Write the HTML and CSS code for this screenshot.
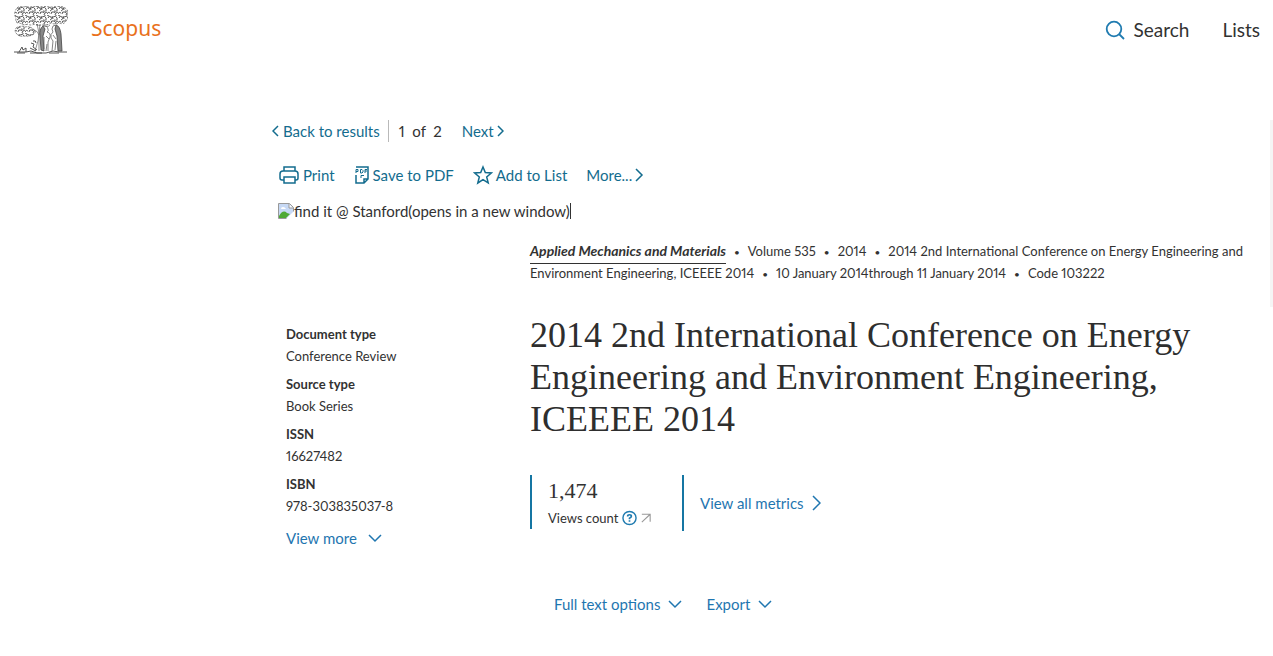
FILE: index.html
```html
<!DOCTYPE html>
<html lang="en">
<head>
<meta charset="utf-8">
<title>Scopus - Document details</title>
<link rel="stylesheet" href="styles.css">
</head>
<body>
<header class="header">
  <a class="brand" href="#">
    <svg class="tree" viewBox="0 0 54 48" width="54" height="48" fill="none" stroke="#666" aria-hidden="true">
      <defs>
        <pattern id="leaves" width="11" height="9" patternUnits="userSpaceOnUse">
          <path d="M1 3q1-3 3-1t-1 3M6 2q3-2 4 1t-3 2M0 8q1-3 3-1M4 8q0-3 3-2t1 3M9 7l2-1M5 1l1 3M0 0l2 1M8 0h2" stroke="#444" stroke-width=".9"/>
        </pattern>
      </defs>
      <path fill="url(#leaves)" stroke-dasharray="2 1.500" stroke-width=".8" d="M3 2q3-3 7-1 5-2 8 0 4-2 8 0 5-2 8 0 4-2 8 0 5-2 9 1 4 2 2 6 2 4-1 7-2 4-7 2-4 2-8 0-4 3-8 1-5 3-8 0-5 2-7 0-5 2-8-1-5 1-4-5-3-5 1-10z"/>
      <path fill="url(#leaves)" stroke-dasharray="2 1" stroke-width=".8" d="M2 22q5-3 9-1 5-1 8 2 4 2 1 5-5 3-10 2-5 1-7-2-3-2-1-6z"/>
      <path stroke-width=".7" d="M23 18l2 9-1 8-3 10M26 18l-1 10v17M20 24q4 1 5 5M28 19q6 3 8 0"/>
      <path fill="#888" stroke="#444" stroke-width=".8" d="M29 20q-4 3-3 10l1 14 3 1-1-15 2-7zM42 19q4 1 5 9l1 17h-4l-1-15-2-7z"/>
      <path stroke-width=".8" d="M29 20q4-1 5 3 1 2-1 3 4 1 3 5l-2 5v9M42 19q-4 0-4 4l1 3q-3 2-2 6l2 3-1 10M32 30l3 3M33 38l-1 7M39 29l3 4M42 35l-1 9M30 31v12"/>
      <path stroke="#444" stroke-width=".9" d="M17 37l3 1-1 3 4 3M19 35q3-1 3 2M16 42l6 3M5 46l3-5 1 3 3-2v4M0 46h12l5-1 6 2h9l7-2 6 1h8M3 47h8M16 47h12M35 47h10"/>
    </svg>
    <span>Scopus</span>
  </a>
  <nav class="header-nav" aria-label="Main">
    <a href="#"><svg width="20" height="20" viewBox="0 0 20 20" fill="none" stroke="#1f7bb0" stroke-width="1.800" aria-hidden="true"><circle cx="9" cy="9" r="7.300"/><path d="M14 14l5 5"/></svg>Search</a>
    <a href="#">Lists</a>
  </nav>
</header>
<div class="page">
  <main class="main">
    <nav class="results-nav" aria-label="Results">
      <a class="back" href="#"><svg width="7" height="12" viewBox="0 0 7 12" class="line"><path d="M6 1L1 6l5 5"/></svg>Back to results</a>
      <span class="count">1&nbsp; of&nbsp; 2</span>
      <a class="next" href="#">Next<svg width="7" height="12" viewBox="0 0 7 12" class="line"><path d="M1 1l5 5-5 5"/></svg></a>
    </nav>
    <div class="toolbar">
      <button type="button"><svg width="22" height="20" viewBox="0 0 22 20" class="line icon"><path d="M6 6V2h11v4M6 15H4q-2 0-2-2V9q0-3 3-3h12q3 0 3 3v4q0 2-2 2h-1M6 12h11v6H6z"/></svg>Print</button>
      <button type="button"><svg width="16" height="18" viewBox="0 0 16 18" class="line icon"><path d="M2 9v8h8l4-4V1H2M10 17v-4h4"/><path stroke-width="1" d="M2 7V3.500h2v2H2M6.500 3.500H8l1 1v1.500l-1 1H6.500zM11 7V3.500h2M11 5h2M7 12V9.500h3"/></svg>Save to PDF</button>
      <button type="button"><svg width="20" height="20" viewBox="0 0 20 20" class="line icon"><path d="M10 2l2.300 5.600 6 .4-4.600 3.900 1.500 6L10 14.600 4.800 18l1.500-6.100L1.700 8l6-.4z"/></svg>Add to List</button>
      <button type="button">More...<svg width="9" height="16" viewBox="0 0 9 16" class="line icon"><path d="M1 2l6 6-6 6"/></svg></button>
    </div>
    <div class="find">
      <svg width="16" height="16" viewBox="0 0 16 16" aria-hidden="true"><path d="M.5.5h11l4 4v5l-5 6H.5z" fill="#c7d9f5" stroke="#999"/><path d="M11 1v4h4" fill="#fff" stroke="#999"/><path d="M3 6q0-2 2-2t3 2z" fill="#fff"/><path d="M1 13q4-7 8-3l3 1-4 4H1z" fill="#4fa935"/><path d="M16 8l-8 8h8z" fill="#fff"/></svg><span class="find-text">find it @ Stanford(opens in a new window)</span>
    </div>
    <div class="document">
      <aside class="sidebar">
        <dl>
          <div><dt>Document type</dt><dd>Conference Review</dd></div>
          <div><dt>Source type</dt><dd>Book Series</dd></div>
          <div><dt>ISSN</dt><dd>16627482</dd></div>
          <div><dt>ISBN</dt><dd>978-303835037-8</dd></div>
        </dl>
        <button type="button" class="expand more">View more<svg width="14" height="10" viewBox="0 0 14 10" class="line"><path d="M1 2l6 6 6-6"/></svg></button>
      </aside>
      <article class="article">
        <p class="source"><a href="#">Applied Mechanics and Materials</a><span class="dot">•</span><span>Volume 535</span><span class="dot">•</span><span>2014</span><span class="dot">•</span><span>2014 2nd International Conference on Energy Engineering and Environment Engineering, ICEEEE 2014</span><span class="dot">•</span><span>10 January 2014through 11 January 2014</span><span class="dot">•</span><span>Code 103222</span></p>
        <h1>2014 2nd International Conference on Energy Engineering and Environment Engineering, ICEEEE 2014</h1>
        <div class="metrics">
          <section class="metric">
            <div class="value">1,474</div>
            <div class="label">Views count<svg width="15" height="16" viewBox="0 0 16 16" class="line"><circle cx="8" cy="8" r="7"/><path stroke-width="1.800" d="M6 6.500Q6 4.500 8 4.500t2 1.700Q10 7.300 8 8.200v1M8 10.500v1.500"/></svg><svg width="10" height="10" viewBox="0 0 12 12" fill="none" stroke="#999" stroke-width="1.300" aria-hidden="true"><path d="M1 11L11 1.500M1 1.500h10v9"/></svg></div>
          </section>
          <section class="metric all"><a href="#">View all metrics<svg width="9" height="16" viewBox="0 0 9 16" class="line"><path d="M1 1l7 7-7 7"/></svg></a></section>
        </div>
        <div class="actions">
          <button type="button" class="expand">Full text options<svg width="14" height="10" viewBox="0 0 14 10" class="line"><path d="M1 2l6 6 6-6"/></svg></button>
          <button type="button" class="expand">Export<svg width="14" height="10" viewBox="0 0 14 10" class="line"><path d="M1 2l6 6 6-6"/></svg></button>
        </div>
      </article>
    </div>
  </main>
  <div class="panel-edge"></div>
</div>
</body>
</html>
```
FILE: styles.css
```css
* { box-sizing: border-box; }
body { margin: 0; background: #fff; color: #323232; font: 15px/22px Lato, "Noto Sans", sans-serif; font-variant-numeric: proportional-nums; }
a, button { color: #136c8e; text-decoration: none; }
button { padding: 0; border: 0; background: none; font: inherit; cursor: pointer; }
p, dl, dd, h1 { margin: 0; }
.line { fill: none; stroke: currentColor; stroke-width: 1.5; flex: none; }

.header { display: flex; align-items: flex-start; justify-content: space-between; height: 62px; padding: 6px 13px 0 14px; }
.brand { display: flex; gap: 23px; color: #e9711c; font: 21px/44px "Noto Sans", sans-serif; }
.header-nav { display: flex; gap: 33px; font-size: 19px; line-height: 24px; padding-top: 12px; }
.header-nav a { display: flex; align-items: center; gap: 8px; color: #323232; }

.page { display: flex; align-items: flex-start; justify-content: space-between; padding-top: 58px; }
.main { flex: 1; padding: 0 22px 40px 278px; }
.panel-edge { width: 3px; height: 187px; background: #f5f5f5; }

.results-nav { display: flex; align-items: center; height: 22px; margin-left: -6px; }
.results-nav a { display: flex; align-items: center; gap: 4px; }
.results-nav .back { padding-right: 8px; }
.results-nav .next { gap: 3px; }
.count { padding: 0 20px 0 10px; border-left: 1px solid #b9b9b9; }

.toolbar { display: flex; gap: 19px; margin-top: 22px; }
.toolbar button { display: flex; align-items: center; gap: 3px; }

.find { display: flex; align-items: center; margin-top: 17px; }
.find-text { border-right: 1px solid #323232; line-height: 16px; }

.document { display: grid; grid-template-columns: 252px 1fr; margin-top: 21px; }
.sidebar { padding: 83px 8px 0; font-size: 13px; }
dl { display: grid; gap: 6px; }
dt { font-weight: 700; }
.expand { display: flex; align-items: center; gap: 8px; color: #1f76b0; font-size: 15px; line-height: 22px; }
.more { gap: 11px; margin-top: 10px; }

.source { font-size: 13px; line-height: 22px; }
.source a { display: inline-block; color: #323232; font-size: 14px; font-weight: 700; font-style: italic; border-bottom: 1px solid #323232; padding-bottom: 1px; margin-bottom: -2px; }
.dot { display: inline-block; margin: 0 8px; font-size: 10px; line-height: 16px; }
h1 { margin-top: 30px; font: 36px/42px "Liberation Serif", serif; color: #2e2e2e; }
.metrics { display: flex; align-items: flex-start; margin-top: 35px; }
.metric { width: 152px; padding-left: 16px; border-left: 2px solid #1576a3; }
.value { font: 22px/32px "Liberation Serif", serif; }
.label { display: flex; align-items: center; gap: 4px; font-size: 13px; color: #323232; }
.label .line { color: #1f7bb0; }
.metric.all { width: auto; height: 56px; display: flex; align-items: center; }
.all a { display: flex; align-items: center; gap: 8px; color: #1f76b0; }
.actions { display: flex; gap: 24px; margin: 62px 0 0 24px; }
```
